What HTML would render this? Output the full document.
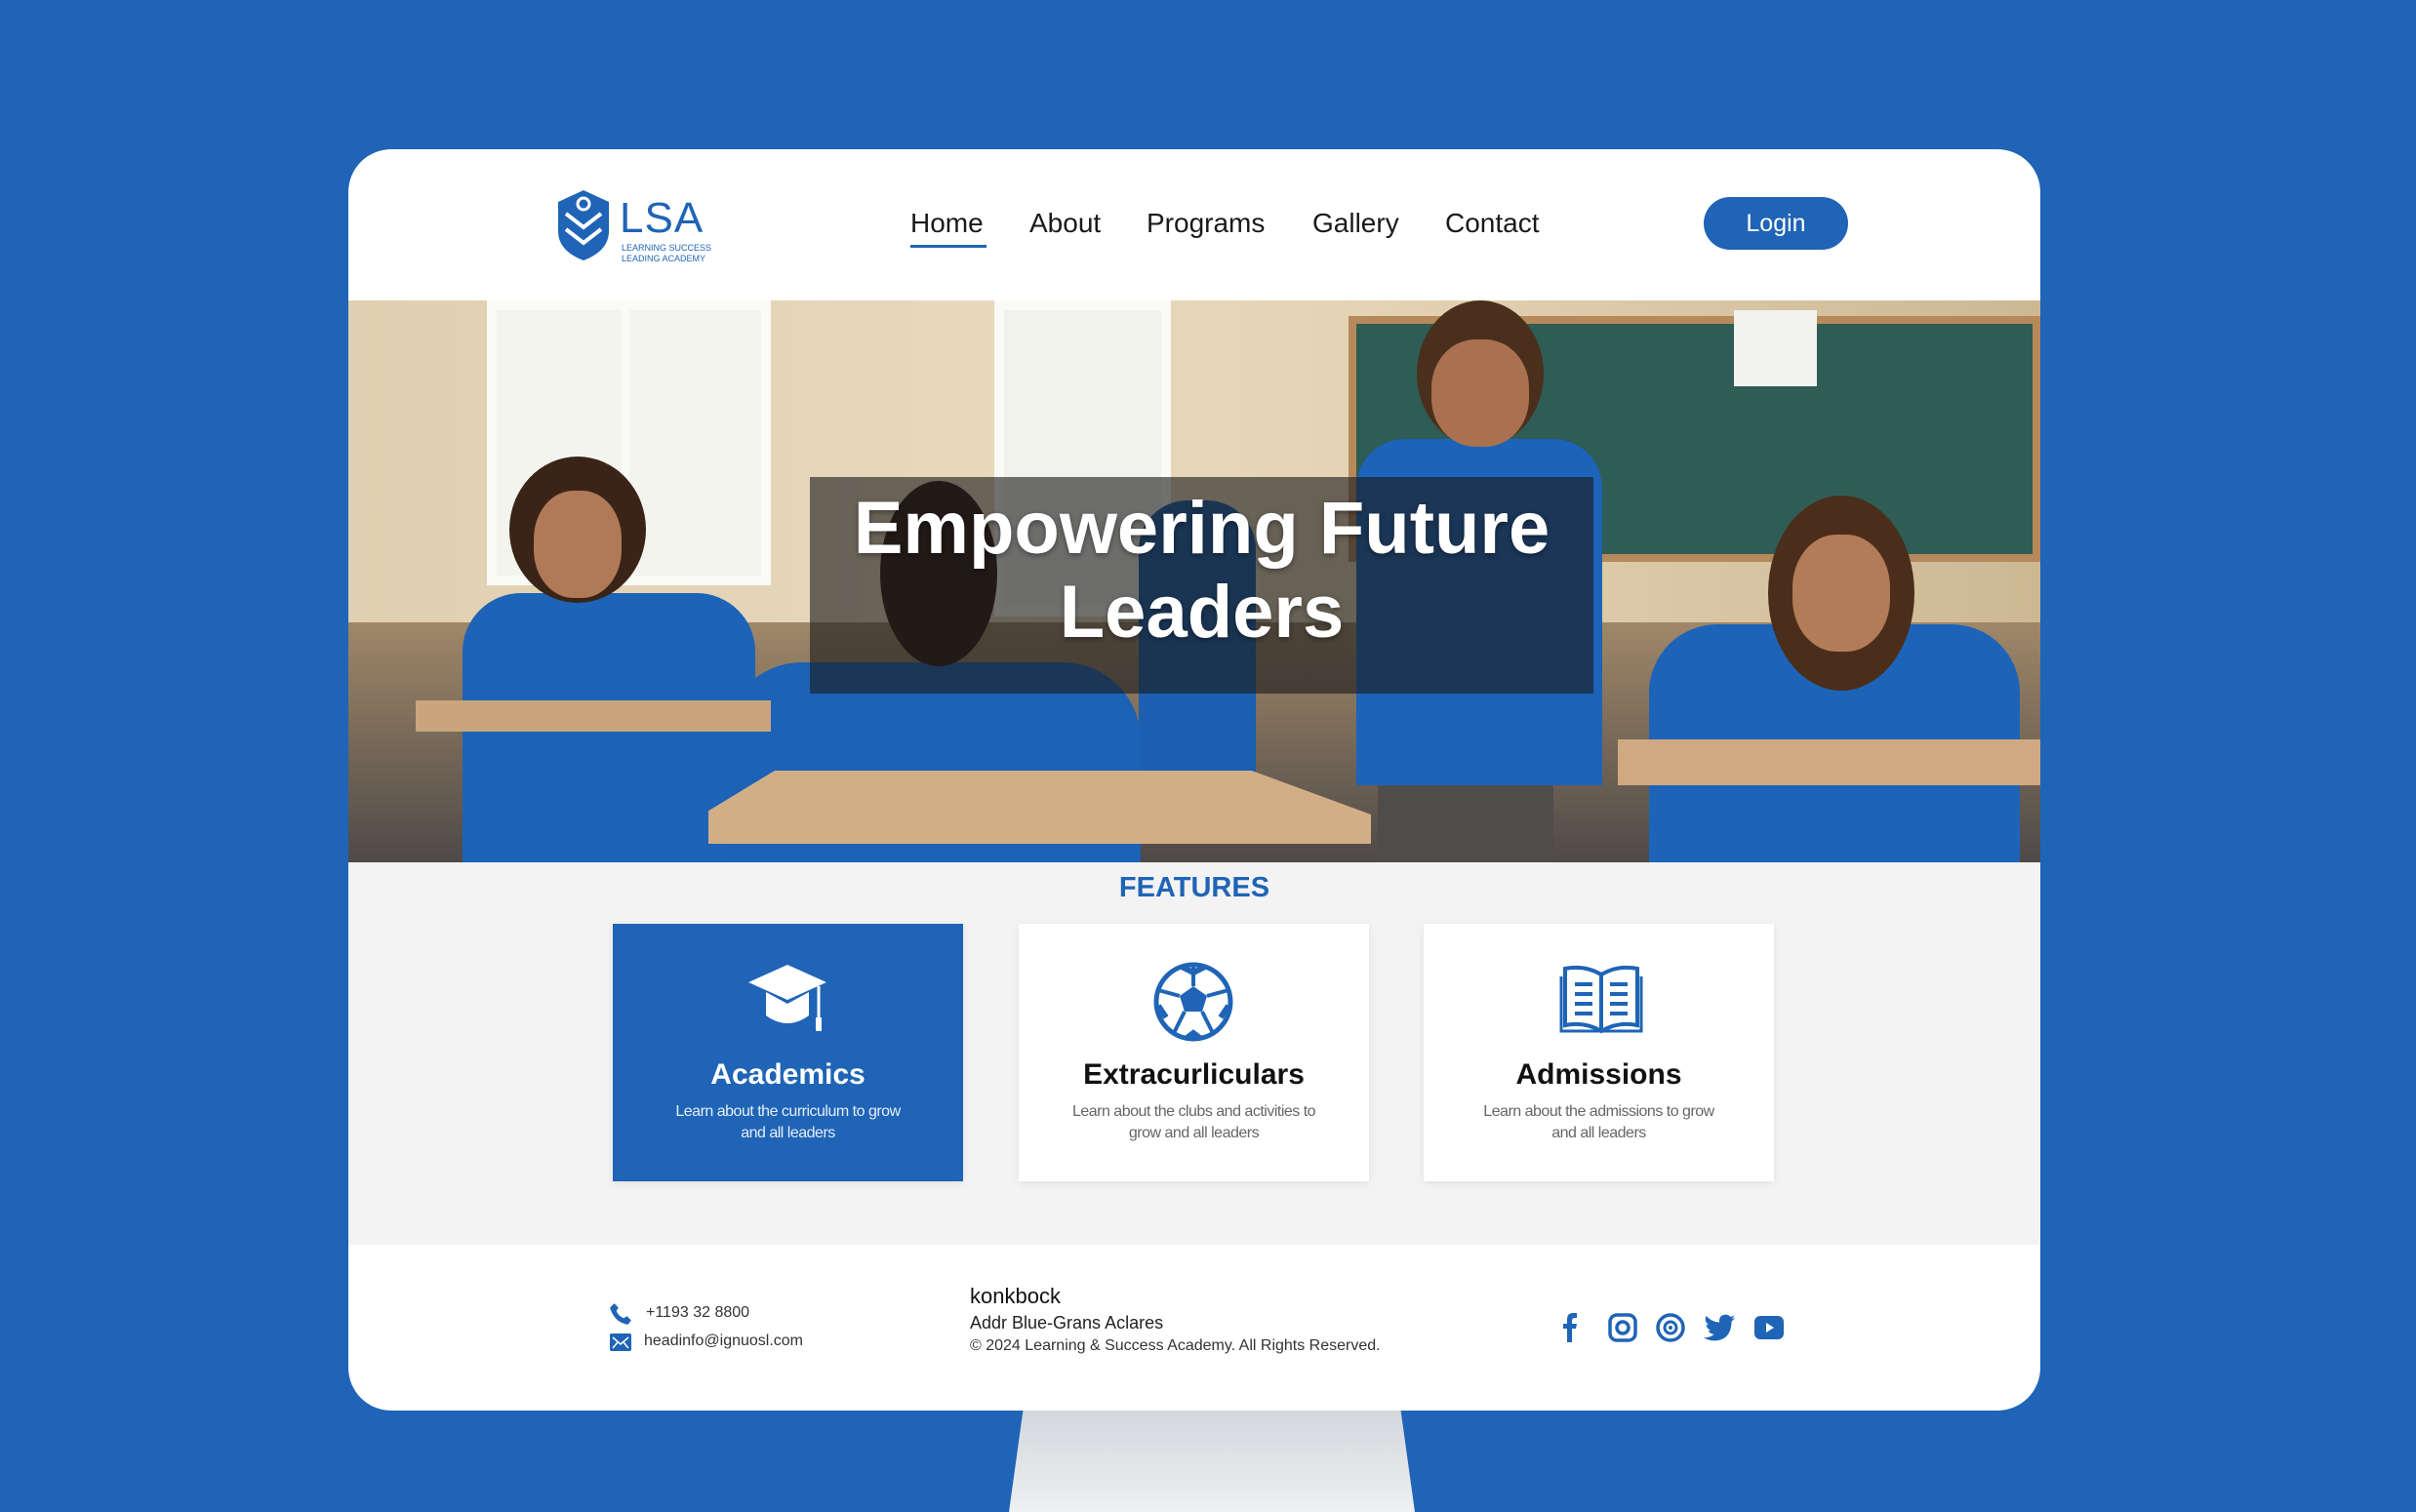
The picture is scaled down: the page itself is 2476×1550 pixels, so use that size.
<!DOCTYPE html>
<html><head><meta charset="utf-8"><style>
*{margin:0;padding:0;box-sizing:border-box}
body{width:2476px;height:1536px;background:#1f64b6;position:relative;overflow:hidden;font-family:"Liberation Sans","DejaVu Sans",sans-serif}
.a{position:absolute}
.stand{left:1034px;top:1430px;width:416px;height:120px;background:linear-gradient(#cfd3d8,#eef0f2);clip-path:polygon(4% 0,96% 0,100% 100%,0 100%)}
.card{left:357px;top:153px;width:1734px;height:1293px;background:#fff;border-radius:44px;overflow:hidden}
.nav{font-size:28px;color:#1a1a1a;top:60px}
.hero{left:0;top:155px;width:1734px;height:576px;overflow:hidden;background:linear-gradient(90deg,#e0cfb0 0%,#e8d9bd 40%,#e4d3b4 60%,#cdb894 100%)}
.feat{left:0;top:731px;width:1734px;height:392px;background:#f3f3f3}
.fc{top:63px;width:359px;height:264px;background:#fff;box-shadow:0 2px 8px rgba(0,0,0,.08);text-align:center}
.fc h3{position:absolute;top:138px;width:100%;font-size:30px;font-weight:bold;color:#111}
.fc p{position:absolute;top:182px;width:100%;font-size:16px;line-height:22px;color:#666;padding:0 50px;letter-spacing:-.5px}
.fc svg{position:absolute;left:137px;top:38px}
</style></head><body>
<div class="a stand"></div>
<div class="a card">
 <svg class="a" style="left:211px;top:40px" width="60" height="76" viewBox="0 0 60 76"><path d="M30 2 L56 14 V44 Q56 64 30 74 Q4 64 4 44 V14Z" fill="#1f64b6"/><path d="M12 26 L30 40 L48 26 M12 42 L30 56 L48 42" stroke="#fff" stroke-width="4" fill="none"/><circle cx="30" cy="16" r="6" fill="none" stroke="#fff" stroke-width="3"/></svg>
 <div class="a" style="left:278px;top:46px;font-size:44px;color:#1f64b6;letter-spacing:1px">LSA</div>
 <div class="a" style="left:280px;top:96px;font-size:9px;color:#1f64b6;line-height:11px">LEARNING SUCCESS<br>LEADING ACADEMY</div>
 <div class="a nav" style="left:576px">Home</div>
 <div class="a" style="left:576px;top:98px;width:78px;height:3px;background:#1f64b6"></div>
 <div class="a nav" style="left:698px">About</div>
 <div class="a nav" style="left:818px">Programs</div>
 <div class="a nav" style="left:988px">Gallery</div>
 <div class="a nav" style="left:1124px">Contact</div>
 <div class="a" style="left:1389px;top:49px;width:148px;height:54px;border-radius:27px;background:#1f64b6;color:#fff;font-size:25px;text-align:center;line-height:54px">Login</div>

 <div class="a hero">
  <div class="a" style="left:142px;top:0;width:291px;height:292px;background:#f4f4ee;border:10px solid #fafaf6"></div>
  <div class="a" style="left:280px;top:0;width:8px;height:292px;background:#fafaf6"></div>
  <div class="a" style="left:662px;top:0;width:181px;height:324px;background:#f2f2ec;border:10px solid #fafaf6"></div>
  <div class="a" style="left:1025px;top:16px;width:709px;height:252px;background:#2f5c55;border:8px solid #b5895a"></div>
  <div class="a" style="left:1420px;top:10px;width:85px;height:78px;background:#f2f2f0"></div>
  <div class="a" style="left:0;top:330px;width:1734px;height:246px;background:linear-gradient(#a08768,#4e4a48)"></div>
  <div class="a" style="left:117px;top:300px;width:300px;height:276px;background:#1d63b8;border-radius:60px 60px 0 0"></div>
  <div class="a" style="left:165px;top:160px;width:140px;height:150px;background:#3a2418;border-radius:50%"></div>
  <div class="a" style="left:190px;top:195px;width:90px;height:110px;background:#b07a58;border-radius:45%"></div>
  <div class="a" style="left:810px;top:205px;width:120px;height:280px;background:#1a5fb0;border-radius:50px 50px 0 0"></div>
  <div class="a" style="left:385px;top:371px;width:427px;height:205px;background:#1c62b6;border-radius:80px 80px 0 0"></div>
  <div class="a" style="left:545px;top:185px;width:120px;height:190px;background:#2b1a12;border-radius:50%"></div>
  <div class="a" style="left:1033px;top:142px;width:252px;height:355px;background:#1c63b9;border-radius:50px 50px 0 0"></div>
  <div class="a" style="left:1055px;top:497px;width:180px;height:79px;background:#4f4c4a"></div>
  <div class="a" style="left:1095px;top:0;width:130px;height:150px;background:#4a2f1d;border-radius:50%"></div>
  <div class="a" style="left:1110px;top:40px;width:100px;height:110px;background:#a9714f;border-radius:45%"></div>
  <div class="a" style="left:1333px;top:332px;width:380px;height:244px;background:#1d64b9;border-radius:70px 70px 0 0"></div>
  <div class="a" style="left:1455px;top:200px;width:150px;height:200px;background:#4b2d1b;border-radius:50%"></div>
  <div class="a" style="left:1480px;top:240px;width:100px;height:120px;background:#b27c58;border-radius:45%"></div>
  <div class="a" style="left:69px;top:410px;width:364px;height:32px;background:#c9a47c"></div>
  <div class="a" style="left:369px;top:482px;width:679px;height:75px;background:#d2ae86;clip-path:polygon(10% 0,82% 0,100% 60%,100% 100%,0 100%,0 55%)"></div>
  <div class="a" style="left:1301px;top:450px;width:433px;height:47px;background:#cfa981"></div>
  <div class="a" style="left:473px;top:181px;width:803px;height:222px;background:rgba(28,28,28,.62)"></div>
  <div class="a" style="left:473px;top:191px;width:803px;text-align:center;color:#fff;font-weight:bold;font-size:76px;line-height:86px;text-shadow:0 2px 6px rgba(0,0,0,.4)">Empowering Future<br>Leaders</div>
 </div>

 <div class="a feat">
  <div class="a" style="left:0;top:10px;width:1734px;text-align:center;font-size:29px;font-weight:bold;color:#1f64b6">FEATURES</div>
  <div class="a fc" style="left:271px;background:#1f64b6">
   <svg width="85" height="80" viewBox="0 0 85 80"><path d="M42 4 L82 22 L42 40 L2 22Z" fill="#fff"/><path d="M20 32 V56 Q42 72 64 56 V32 L42 44Z" fill="#fff"/><path d="M74 26 V62" stroke="#fff" stroke-width="3"/><rect x="71" y="58" width="6" height="14" fill="#fff"/></svg>
   <h3 style="color:#fff">Academics</h3><p style="color:#e6eefa">Learn about the curriculum to grow and all leaders</p></div>
  <div class="a fc" style="left:687px">
   <svg width="85" height="85" viewBox="0 0 85 85"><circle cx="42" cy="42" r="38" fill="#fff" stroke="#1f64b6" stroke-width="5"/><path d="M42 26 L56 36 L51 52 H33 L28 36Z" fill="#1f64b6"/><path d="M42 6 L42 26 M56 36 L78 30 M51 52 L62 74 M33 52 L22 74 M28 36 L6 30" stroke="#1f64b6" stroke-width="4"/><path d="M30 6 L42 12 L54 6 M78 46 L70 58 M6 46 L14 58 M34 80 L42 74 L50 80" stroke="#1f64b6" stroke-width="6" fill="none"/></svg>
   <h3>Extracurliculars</h3><p>Learn about the clubs and activities to grow and all leaders</p></div>
  <div class="a fc" style="left:1102px">
   <svg width="90" height="80" viewBox="0 0 90 80"><path d="M45 14 Q28 4 8 8 V66 Q28 62 45 72 Q62 62 82 66 V8 Q62 4 45 14Z M45 14 V72" fill="none" stroke="#1f64b6" stroke-width="4"/><path d="M4 16 V72 H86 V16" fill="none" stroke="#1f64b6" stroke-width="3"/><path d="M18 24 H36 M18 34 H36 M18 44 H36 M18 54 H36 M54 24 H72 M54 34 H72 M54 44 H72 M54 54 H72" stroke="#1f64b6" stroke-width="4"/></svg>
   <h3>Admissions</h3><p>Learn about the admissions to grow and all leaders</p></div>
 </div>

 <svg class="a" style="left:266px;top:1181px" width="26" height="26" viewBox="0 0 24 24"><path d="M6 2 L10 6 L8 9 Q10 14 15 16 L18 14 L22 18 L19 22 Q6 20 2 6Z" fill="#1f64b6"/></svg>
 <div class="a" style="left:305px;top:1184px;font-size:16px;color:#333">+1193 32 8800</div>
 <svg class="a" style="left:268px;top:1214px" width="22" height="18" viewBox="0 0 22 18"><rect width="22" height="18" rx="2" fill="#1f64b6"/><path d="M3 4 L11 11 L19 4 M3 15 L8 9 M19 15 L14 9" stroke="#fff" stroke-width="1.5" fill="none"/></svg>
 <div class="a" style="left:303px;top:1213px;font-size:16px;color:#333">headinfo@ignuosl.com</div>
 <div class="a" style="left:637px;top:1163px;font-size:22px;color:#111">konkbock</div>
 <div class="a" style="left:637px;top:1193px;font-size:18px;color:#222">Addr Blue-Grans Aclares</div>
 <div class="a" style="left:637px;top:1218px;font-size:16px;color:#333">© 2024 Learning &amp; Success Academy. All Rights Reserved.</div>
 <svg class="a" style="left:1244px;top:1193px" width="16" height="30" viewBox="0 0 16 30"><path d="M10 30 V16 H14 L15 11 H10 V8 Q10 5 13 5 H15 V0 H11 Q5 0 5 7 V11 H1 V16 H5 V30Z" fill="#1f64b6"/></svg>
 <svg class="a" style="left:1291px;top:1193px" width="30" height="30" viewBox="0 0 30 30"><rect x="2" y="2" width="26" height="26" rx="7" fill="none" stroke="#1f64b6" stroke-width="3.5"/><circle cx="15" cy="15" r="6" fill="none" stroke="#1f64b6" stroke-width="3.5"/></svg>
 <svg class="a" style="left:1340px;top:1193px" width="30" height="30" viewBox="0 0 30 30"><circle cx="15" cy="15" r="13" fill="none" stroke="#1f64b6" stroke-width="3.5"/><circle cx="15" cy="15" r="6" fill="none" stroke="#1f64b6" stroke-width="3"/><circle cx="15" cy="15" r="2" fill="#1f64b6"/></svg>
 <svg class="a" style="left:1389px;top:1194px" width="32" height="28" viewBox="0 0 24 20"><path d="M24 2.5 Q22.5 3 21.5 3.2 Q23 2 23.5 0.5 Q22 1.4 20.5 1.7 Q19 0 16.8 0 Q12 0.3 12 5 V6 Q6 5.6 2 1 Q0 5 4 8 Q2.8 8 2 7.5 Q2 11 5.5 12 Q4.5 12.3 3.5 12 Q4.5 15 8 15.2 Q4.5 18 0 17.5 Q3.5 20 8 20 Q21 20 21.5 5 Q23 4 24 2.5Z" fill="#1f64b6"/></svg>
 <svg class="a" style="left:1441px;top:1196px" width="30" height="24" viewBox="0 0 30 24"><rect width="30" height="24" rx="6" fill="#1f64b6"/><path d="M12 7 L20 12 L12 17Z" fill="#fff"/></svg>
</div>
</body></html>
